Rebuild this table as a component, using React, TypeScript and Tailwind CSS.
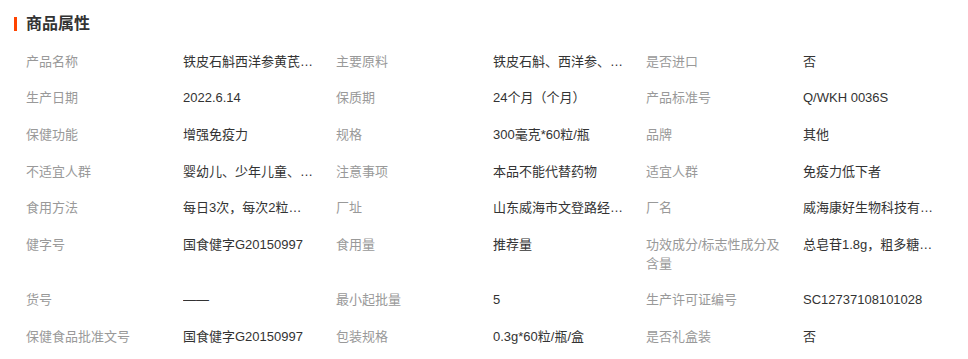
import React from "react";

type Attr = { label: string; value: string };

const rows: Attr[][] = [
    [
        { label: "产品名称", value: "铁皮石斛西洋参黄芪胶囊" },
        { label: "主要原料", value: "铁皮石斛、西洋参、黄芪" },
        { label: "是否进口", value: "否" },
    ],
    [
        { label: "生产日期", value: "2022.6.14" },
        { label: "保质期", value: "24个月（个月）" },
        { label: "产品标准号", value: "Q/WKH 0036S" },
    ],
    [
        { label: "保健功能", value: "增强免疫力" },
        { label: "规格", value: "300毫克*60粒/瓶" },
        { label: "品牌", value: "其他" },
    ],
    [
        { label: "不适宜人群", value: "婴幼儿、少年儿童、孕妇" },
        { label: "注意事项", value: "本品不能代替药物" },
        { label: "适宜人群", value: "免疫力低下者" },
    ],
    [
        { label: "食用方法", value: "每日3次，每次2粒，口服" },
        { label: "厂址", value: "山东威海市文登路经济开发区" },
        { label: "厂名", value: "威海康好生物科技有限公司" },
    ],
    [
        { label: "健字号", value: "国食健字G20150997" },
        { label: "食用量", value: "推荐量" },
        { label: "功效成分/标志性成分及含量", value: "总皂苷1.8g，粗多糖2.5g" },
    ],
    [
        { label: "货号", value: "——" },
        { label: "最小起批量", value: "5" },
        { label: "生产许可证编号", value: "SC12737108101028" },
    ],
    [
        { label: "保健食品批准文号", value: "国食健字G20150997" },
        { label: "包装规格", value: "0.3g*60粒/瓶/盒" },
        { label: "是否礼盒装", value: "否" },
    ],
];

const App: React.FC = () => {
    return (
        <div
            className="w-[968px] h-[359px] bg-white pt-[16px] overflow-hidden"
            style={{ fontFamily: '"Liberation Sans", "Noto Sans CJK SC", sans-serif' }}
        >
            {/* Section title */}
            <div className="flex items-center h-[16px] pl-[14px]">
                <span className="w-[3px] h-[14px] bg-[#ff4400]" />
                <h2 className="ml-[9px] text-[16px] leading-[16px] font-bold text-[#333]">商品属性</h2>
            </div>

            {/* Attribute table */}
            <div className="mt-[11px] pl-[26px]">
                {rows.map((row, i) => (
                    <div key={i} className="flex">
                        {row.map((item, j) => (
                            <div key={j} className="flex w-[310px] py-[8.8px] text-[13px] leading-[19px]">
                                <div className="w-[157px] pr-[14px] text-[#999]">{item.label}</div>
                                <div className="w-[153px] pr-[22px] text-[#333] truncate">{item.value}</div>
                            </div>
                        ))}
                    </div>
                ))}
            </div>
        </div>
    );
};

export default App;
